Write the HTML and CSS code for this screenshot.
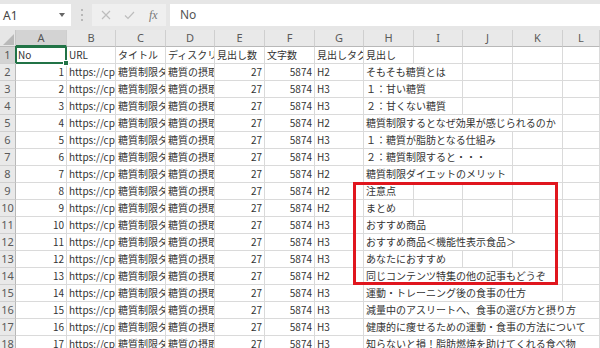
FILE: index.html
```html
<!DOCTYPE html>
<html lang="ja">
<head>
<meta charset="utf-8">
<title>Sheet</title>
<link rel="stylesheet" href="styles.css">
</head>
<body>
<div class="app">
  <div class="toolbar">
    <div class="namebox"><span>A1</span><svg class="caret" width="6" height="4" viewBox="0 0 6 4"><path d="M0 0h6L3 4z" fill="#666"/></svg></div>
    <div class="sep"><svg width="2" height="12" viewBox="0 0 2 12"><rect x="0" y="0" width="2" height="2" fill="#b8b8b8"/><rect x="0" y="5" width="2" height="2" fill="#b8b8b8"/><rect x="0" y="10" width="2" height="2" fill="#b8b8b8"/></svg></div>
    <div class="fbtns">
      <svg width="10" height="10" viewBox="0 0 10 10"><path d="M1 1L9 9M9 1L1 9" stroke="#bdbdbd" stroke-width="1.2" fill="none"/></svg>
      <svg width="11" height="9" viewBox="0 0 11 9"><path d="M1 4.5L4 7.5L10 1" stroke="#bdbdbd" stroke-width="1.2" fill="none"/></svg>
      <span class="fx">fx</span>
    </div>
    <div class="formula">No</div>
  </div>
  <div class="sheet">
    <div class="grid">
      <div class="corner"><svg width="11" height="11" viewBox="0 0 11 11"><path d="M11 0V11H0z" fill="#b9b9b9"/></svg></div>
      <div class="ch ch-sel">A</div><div class="ch">B</div><div class="ch">C</div><div class="ch">D</div><div class="ch">E</div><div class="ch">F</div><div class="ch">G</div><div class="ch">H</div><div class="ch">I</div><div class="ch">J</div><div class="ch">K</div><div class="ch">L</div>

      <div class="rh rh-sel">1</div><div class="c sel">No</div><div class="c">URL</div><div class="c">タイトル</div><div class="c">ディスクリプション</div><div class="c">見出し数</div><div class="c">文字数</div><div class="c">見出しタグ</div><div class="c">見出し</div><div class="c"></div><div class="c"></div><div class="c"></div><div class="c"></div>

      <div class="rh">2</div><div class="c num">1</div><div class="c">https://cp</div><div class="c">糖質制限ダイエット</div><div class="c">糖質の摂取</div><div class="c num">27</div><div class="c num">5874</div><div class="c">H2</div><div class="c s2">そもそも糖質とは</div><div class="c"></div><div class="c"></div><div class="c"></div>

      <div class="rh">3</div><div class="c num">2</div><div class="c">https://cp</div><div class="c">糖質制限ダイエット</div><div class="c">糖質の摂取</div><div class="c num">27</div><div class="c num">5874</div><div class="c">H3</div><div class="c s2">１：甘い糖質</div><div class="c"></div><div class="c"></div><div class="c"></div>

      <div class="rh">4</div><div class="c num">3</div><div class="c">https://cp</div><div class="c">糖質制限ダイエット</div><div class="c">糖質の摂取</div><div class="c num">27</div><div class="c num">5874</div><div class="c">H3</div><div class="c s2">２：甘くない糖質</div><div class="c"></div><div class="c"></div><div class="c"></div>

      <div class="rh">5</div><div class="c num">4</div><div class="c">https://cp</div><div class="c">糖質制限ダイエット</div><div class="c">糖質の摂取</div><div class="c num">27</div><div class="c num">5874</div><div class="c">H2</div><div class="c s4">糖質制限するとなぜ効果が感じられるのか</div><div class="c"></div>

      <div class="rh">6</div><div class="c num">5</div><div class="c">https://cp</div><div class="c">糖質制限ダイエット</div><div class="c">糖質の摂取</div><div class="c num">27</div><div class="c num">5874</div><div class="c">H3</div><div class="c s3">１：糖質が脂肪となる仕組み</div><div class="c"></div><div class="c"></div>

      <div class="rh">7</div><div class="c num">6</div><div class="c">https://cp</div><div class="c">糖質制限ダイエット</div><div class="c">糖質の摂取</div><div class="c num">27</div><div class="c num">5874</div><div class="c">H3</div><div class="c s3">２：糖質制限すると・・・</div><div class="c"></div><div class="c"></div>

      <div class="rh">8</div><div class="c num">7</div><div class="c">https://cp</div><div class="c">糖質制限ダイエット</div><div class="c">糖質の摂取</div><div class="c num">27</div><div class="c num">5874</div><div class="c">H2</div><div class="c s3">糖質制限ダイエットのメリット</div><div class="c"></div><div class="c"></div>

      <div class="rh">9</div><div class="c num">8</div><div class="c">https://cp</div><div class="c">糖質制限ダイエット</div><div class="c">糖質の摂取</div><div class="c num">27</div><div class="c num">5874</div><div class="c">H2</div><div class="c">注意点</div><div class="c"></div><div class="c"></div><div class="c"></div><div class="c"></div>

      <div class="rh">10</div><div class="c num">9</div><div class="c">https://cp</div><div class="c">糖質制限ダイエット</div><div class="c">糖質の摂取</div><div class="c num">27</div><div class="c num">5874</div><div class="c">H2</div><div class="c">まとめ</div><div class="c"></div><div class="c"></div><div class="c"></div><div class="c"></div>

      <div class="rh">11</div><div class="c num">10</div><div class="c">https://cp</div><div class="c">糖質制限ダイエット</div><div class="c">糖質の摂取</div><div class="c num">27</div><div class="c num">5874</div><div class="c">H3</div><div class="c s2">おすすめ商品</div><div class="c"></div><div class="c"></div><div class="c"></div>

      <div class="rh">12</div><div class="c num">11</div><div class="c">https://cp</div><div class="c">糖質制限ダイエット</div><div class="c">糖質の摂取</div><div class="c num">27</div><div class="c num">5874</div><div class="c">H3</div><div class="c s4">おすすめ商品＜機能性表示食品＞</div><div class="c"></div>

      <div class="rh">13</div><div class="c num">12</div><div class="c">https://cp</div><div class="c">糖質制限ダイエット</div><div class="c">糖質の摂取</div><div class="c num">27</div><div class="c num">5874</div><div class="c">H3</div><div class="c s2">あなたにおすすめ</div><div class="c"></div><div class="c"></div><div class="c"></div>

      <div class="rh">14</div><div class="c num">13</div><div class="c">https://cp</div><div class="c">糖質制限ダイエット</div><div class="c">糖質の摂取</div><div class="c num">27</div><div class="c num">5874</div><div class="c">H2</div><div class="c s4">同じコンテンツ特集の他の記事もどうぞ</div><div class="c"></div>

      <div class="rh">15</div><div class="c num">14</div><div class="c">https://cp</div><div class="c">糖質制限ダイエット</div><div class="c">糖質の摂取</div><div class="c num">27</div><div class="c num">5874</div><div class="c">H3</div><div class="c s4">運動・トレーニング後の食事の仕方</div><div class="c"></div>

      <div class="rh">16</div><div class="c num">15</div><div class="c">https://cp</div><div class="c">糖質制限ダイエット</div><div class="c">糖質の摂取</div><div class="c num">27</div><div class="c num">5874</div><div class="c">H3</div><div class="c s5">減量中のアスリートへ、食事の選び方と摂り方</div>

      <div class="rh">17</div><div class="c num">16</div><div class="c">https://cp</div><div class="c">糖質制限ダイエット</div><div class="c">糖質の摂取</div><div class="c num">27</div><div class="c num">5874</div><div class="c">H3</div><div class="c s5">健康的に痩せるための運動・食事の方法について</div>

      <div class="rh">18</div><div class="c num">17</div><div class="c">https://cp</div><div class="c">糖質制限ダイエット</div><div class="c">糖質の摂取</div><div class="c num">27</div><div class="c num">5874</div><div class="c">H3</div><div class="c s5">知らないと損！脂肪燃焼を助けてくれる食べ物</div>
    </div>
    <div class="highlight"></div>
  </div>
</div>
</body>
</html>
```
FILE: styles.css
```css
html, body {
  margin: 0;
  padding: 0;
}
body {
  width: 600px;
  height: 348px;
  overflow: hidden;
  background: #fff;
  font-family: "Noto Sans CJK JP", "Noto Sans", sans-serif;
}
.app {
  width: 600px;
}
.toolbar {
  height: 30px;
  box-sizing: border-box;
  padding-top: 4px;
  background: #e6e6e6;
  display: flex;
  align-items: flex-start;
}
.namebox {
  width: 71px;
  height: 22px;
  box-sizing: border-box;
  background: #fff;
  display: flex;
  align-items: center;
  justify-content: space-between;
  padding: 0 6px 0 3px;
  font: 12px "Noto Sans", sans-serif;
  color: #444;
}
.sep {
  width: 21px;
  height: 22px;
  display: flex;
  align-items: center;
  justify-content: center;
}
.fbtns {
  width: 74px;
  height: 22px;
  box-sizing: border-box;
  background: #efefef;
  display: flex;
  align-items: center;
  padding-left: 9px;
  gap: 13px;
}
.fx {
  font: italic 12px "Liberation Serif", serif;
  color: #777;
  margin-left: 1px;
}
.formula {
  flex: 1;
  height: 22px;
  margin-left: 4px;
  background: #fff;
  box-sizing: border-box;
  padding-left: 10px;
  font: 12px "Noto Sans", sans-serif;
  line-height: 22px;
  color: #555;
}
.sheet {
  position: relative;
}
.grid {
  display: grid;
  grid-template-columns: 16px 51px 49px 50px 49px 50px 50px 49px 50px 49px 50px 50px 37px;
  grid-auto-rows: 17px;
}
.corner {
  background: #e6e6e6;
  border-right: 1px solid #c6c6c6;
  border-bottom: 1px solid #b8b8b8;
  box-sizing: border-box;
  display: flex;
  align-items: flex-end;
  justify-content: flex-end;
  padding: 0 1px 1px 0;
}
.ch {
  background: #e9e9e9;
  border-right: 1px solid #cfcfcf;
  border-bottom: 1px solid #b8b8b8;
  box-sizing: border-box;
  text-align: center;
  font: 11px "Noto Sans", sans-serif;
  line-height: 16px;
  color: #5a5a5a;
}
.ch-sel {
  background: #d3d3d3;
  color: #555;
  border-bottom: 2px solid #217346;
}
.rh {
  background: #e9e9e9;
  border-right: 1px solid #b8b8b8;
  border-bottom: 1px solid #d0d0d0;
  box-sizing: border-box;
  text-align: center;
  font: 11px "Noto Sans", sans-serif;
  line-height: 16px;
  color: #5a5a5a;
}
.rh-sel {
  background: #d3d3d3;
  color: #555;
}
.c {
  border-right: 1px solid #dadada;
  border-bottom: 1px solid #dadada;
  box-sizing: border-box;
  padding: 0 2px;
  font-size: 10px;
  line-height: 16px;
  color: #333;
  white-space: nowrap;
  overflow: hidden;
}
.num {
  text-align: right;
}
.s2 { grid-column: span 2; }
.s3 { grid-column: span 3; }
.s4 { grid-column: span 4; }
.s5 { grid-column: span 5; }
.sel {
  position: relative;
  overflow: visible;
  box-shadow: inset 0 0 0 1px #217346, -1px -1px 0 0 #217346;
  border-right: 1px solid #217346;
  border-bottom: 1px solid #217346;
}
.sel::after {
  content: "";
  position: absolute;
  right: -3px;
  bottom: -3px;
  width: 4px;
  height: 4px;
  background: #217346;
  border: 1px solid #fff;
}
.highlight {
  position: absolute;
  left: 353px;
  top: 152px;
  width: 205px;
  height: 103px;
  box-sizing: border-box;
  border: 3px solid #e0161e;
}
```
